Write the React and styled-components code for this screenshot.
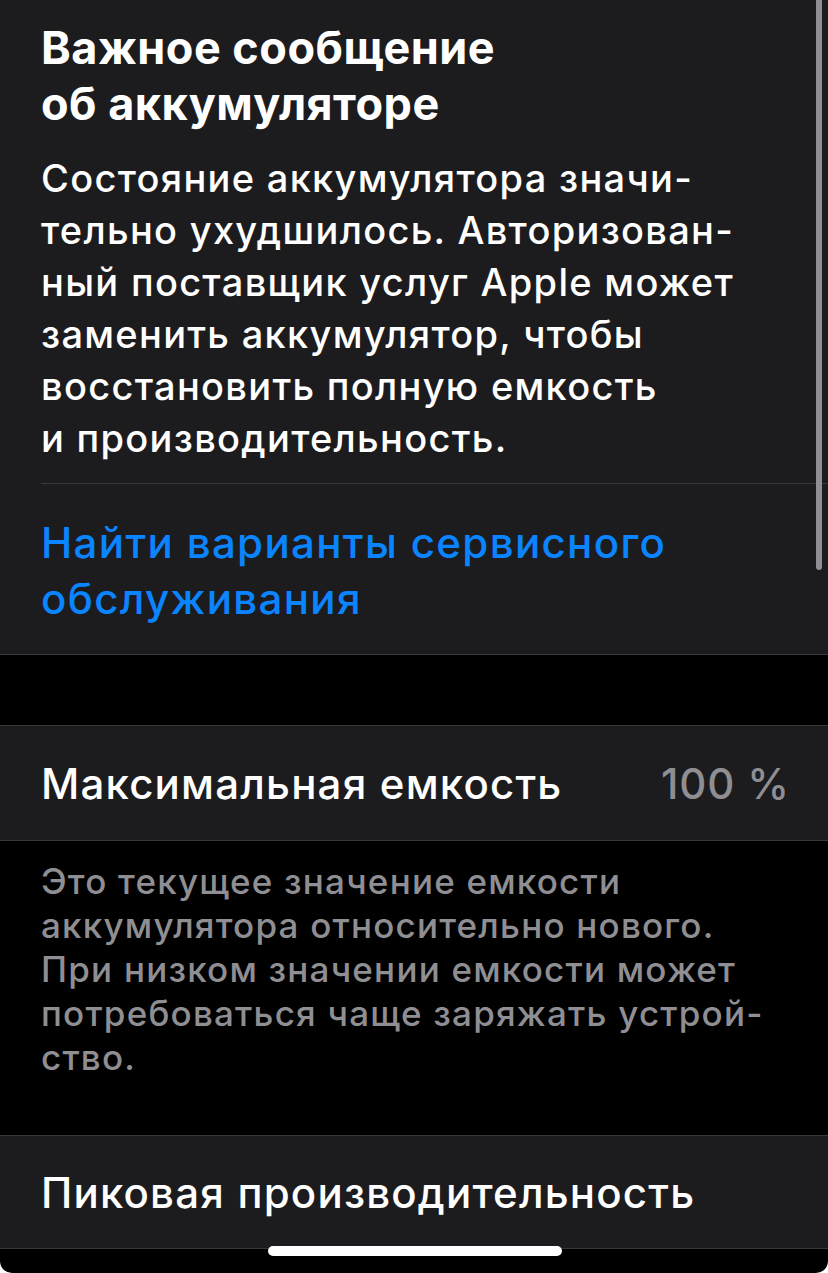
import styled, { createGlobalStyle } from 'styled-components';

const GlobalStyle = createGlobalStyle`
  html, body {
    margin: 0;
    padding: 0;
    background: #ffffff;
  }
  body {
    font-family: Inter, "Noto Sans", "Liberation Sans", sans-serif;
    -webkit-font-smoothing: antialiased;
  }
`;

const Screen = styled.div`
  position: relative;
  width: 828px;
  height: 1273px;
  background: #000000;
  overflow: hidden;
  border-radius: 0 0 12px 12px;
`;

const Card = styled.section`
  background: #1c1c1e;
  border-bottom: 1px solid #38383a;
  border-top: ${props => (props.$top ? '1px solid #38383a' : 'none')};
`;

const Message = styled.div`
  padding: 20px 20px 19px 41px;
`;

const Title = styled.h1`
  margin: 0;
  font-size: 45px;
  line-height: 56px;
  font-weight: 700;
  color: #ffffff;
  letter-spacing: 0.5px;
`;

const Body = styled.p`
  margin: 20px 0 0;
  font-size: 38px;
  line-height: 52px;
  font-weight: 500;
  color: #ffffff;
  letter-spacing: 1.3px;
`;

const LinkRow = styled.div`
  margin-left: 41px;
  border-top: 1px solid #38383a;
  padding: 31px 20px 27px 0;
`;

const Link = styled.a`
  display: block;
  font-size: 42px;
  line-height: 56px;
  font-weight: 500;
  color: #0a84ff;
  text-decoration: none;
  letter-spacing: 1.35px;
`;

const Gap = styled.div`
  height: 70px;
`;

const Row = styled.div`
  display: flex;
  align-items: center;
  justify-content: space-between;
  height: ${props => props.$height}px;
  padding: 0 38px 0 41px;
`;

const RowLabel = styled.span`
  font-size: 42px;
  font-weight: 500;
  color: #ffffff;
  letter-spacing: 1.2px;
`;

const RowValue = styled.span`
  font-size: 42px;
  font-weight: 500;
  color: #8e8e93;
  letter-spacing: 0.9px;
`;

const Footer = styled.p`
  margin: 0;
  padding: 18px 20px 56px 41px;
  font-size: 35px;
  line-height: 44px;
  font-weight: 500;
  color: #8e8e93;
  letter-spacing: 1.2px;
`;

const ScrollIndicator = styled.div`
  position: absolute;
  top: 0;
  right: 6px;
  width: 6px;
  height: 570px;
  border-radius: 0 0 3px 3px;
  background: #8e8e93;
`;

const HomeIndicator = styled.div`
  position: absolute;
  left: 268px;
  bottom: 17px;
  width: 294px;
  height: 10px;
  border-radius: 5px;
  background: #ffffff;
`;

export default function App() {
  return (
    <>
      <GlobalStyle />
      <Screen>
        <Card>
          <Message>
            <Title>
              Важное сообщение
              <br />
              об аккумуляторе
            </Title>
            <Body>
              Состояние аккумулятора значи-
              <br />
              тельно ухудшилось. Авторизован-
              <br />
              ный поставщик услуг Apple может
              <br />
              заменить аккумулятор, чтобы
              <br />
              восстановить полную емкость
              <br />
              и производительность.
            </Body>
          </Message>
          <LinkRow>
            <Link href="#">
              Найти варианты сервисного
              <br />
              обслуживания
            </Link>
          </LinkRow>
        </Card>
        <Gap />
        <Card $top>
          <Row $height={114}>
            <RowLabel>Максимальная емкость</RowLabel>
            <RowValue>100 %</RowValue>
          </Row>
        </Card>
        <Footer>
          Это текущее значение емкости
          <br />
          аккумулятора относительно нового.
          <br />
          При низком значении емкости может
          <br />
          потребоваться чаще заряжать устрой-
          <br />
          ство.
        </Footer>
        <Card $top>
          <Row $height={112}>
            <RowLabel>Пиковая производительность</RowLabel>
          </Row>
        </Card>
        <ScrollIndicator />
        <HomeIndicator />
      </Screen>
    </>
  );
}
